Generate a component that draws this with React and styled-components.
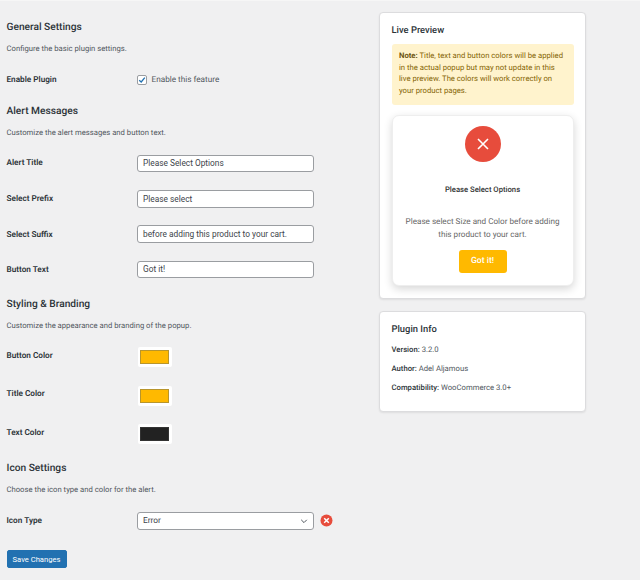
import React from 'react';
import styled, { createGlobalStyle } from 'styled-components';

const FONT = `Roboto, "Open Sans", "Liberation Sans", sans-serif`;
const Global = createGlobalStyle`
  html, body { margin: 0; padding: 0; background: #f0f0f1; }
  body { font-family: ${FONT}; color: #3c434a; text-rendering: geometricPrecision; }
`;
const Page = styled.div`
  width: 640px; height: 580px; overflow: hidden; box-sizing: border-box;
  display: flex; align-items: flex-start; padding: 0 0 0 6.5px; border-top: 1px solid #f6f6f6;
`;
const Main = styled.form`width: 372.5px; flex: none; padding-top: 20px;`;
const SectionTitle = styled.h2`
  margin: 0; font-size: 10.2px; line-height: 14px; font-weight: 500; color: #2c3338;
`;
const Description = styled.p`
  margin: 7px 0 0; font-size: 7.7px; line-height: 14px; color: #50575e; height: 14px;
`;
const Section = styled.section`margin-top: ${p => p.$top}px;`;
const Row = styled.div`
  display: grid; grid-template-columns: 130.5px auto; justify-content: start; align-items: center;
  height: ${p => p.$h}px; margin-top: ${p => p.$top}px;
`;
const Label = styled.label`
  font-size: 8.2px; font-weight: 600; color: #2c3338; line-height: 12px; position: relative; top: ${p => p.$shift || 0}px;
`;
const CheckLine = styled.div`display: flex; align-items: center; gap: 5px; font-size: 8.2px; color: #50575e;`;
const Box = styled.span`
  width: 8px; height: 8px; border: 1px solid #9a9da1; border-radius: 2px; background: #fff; display: flex;
  align-items: center; justify-content: center; margin-left: -0.5px;
`;
const TextInput = styled.input`
  box-sizing: border-box; width: 177px; height: 17.5px; border: 1px solid #9a9da1; border-radius: 3px;
  background: #fff; padding: 0 5px; font: 8.33px ${FONT}; color: #3c434a; outline: none;
`;
const Swatch = styled.span`
  box-sizing: border-box; display: block; width: 34px; height: 20px; background: #fff; border-radius: 2px;
  padding: 3px 2.5px; margin-left: 0.5px;
`;
const SwatchFill = styled.span`
  display: block; height: 100%; box-sizing: border-box; background: ${p => p.$c};
  border: 1px solid ${p => p.$edge};
`;
const SelectLine = styled.div`display: flex; align-items: center; gap: 6px;`;
const SelectBox = styled.div`
  box-sizing: border-box; width: 177px; height: 17.5px; border: 1px solid #9a9da1; border-radius: 3px; background: #fff;
  padding: 0 5px; font-size: 8.33px; color: #3c434a; display: flex; align-items: center; justify-content: space-between;
`;
const SaveButton = styled.button`
  display: block; margin-top: 20.5px; width: 60px; height: 18px; padding: 0; background: #2271b1; color: #fff;
  border: 1px solid #2271b1; border-radius: 2px; font: 7.6px ${FONT};
`;
const Side = styled.aside`width: 207px; flex: none; display: flex; flex-direction: column; gap: 12px; padding-top: 11px;`;
const Card = styled.div`
  box-sizing: border-box; background: #fff; border: 1px solid #dcdcde; border-radius: 4px;
  box-shadow: 0 1px 2px rgba(0,0,0,.08); padding: ${p => p.$pad};
  height: ${p => p.$h}px;
`;
const CardTitle = styled.h3`margin: 0; font-size: 9.4px; line-height: 13px; font-weight: 500; color: #2c3338;`;
const Note = styled.div`
  box-sizing: border-box; margin-top: 7px; height: 61px; padding: 6px 7.5px; background: #fff3cd; border-radius: 3px;
  font-size: 7.7px; line-height: 11.7px; color: #856404; white-space: nowrap;
  b { font-weight: 700; color: #6b5410; }
`;
const Popup = styled.div`
  box-sizing: border-box; margin-top: 10px; height: 171px; background: #fff; border-radius: 7px; border: 1px solid #eee;
  box-shadow: 0 3px 8px rgba(0,0,0,.16); display: flex; flex-direction: column; align-items: center; padding-top: 10px;
`;
const ErrorCircle = styled.div`
  width: 36px; height: 36px; border-radius: 50%; background: #e74c3c; display: flex; align-items: center; justify-content: center;
`;
const PopupTitle = styled.div`margin-top: 22px; font-size: 7.7px; line-height: 12px; font-weight: 500; color: #333;`;
const PopupText = styled.div`margin-top: 19px; font-size: 8.15px; line-height: 12.8px; color: #666; text-align: center; white-space: nowrap;`;
const GotIt = styled.div`
  margin-top: 9px; width: 48px; height: 23px; border-radius: 3px; background: #ffb900; color: #fff; font-size: 8.6px;
  font-weight: 500; display: flex; align-items: center; justify-content: center;
`;
const InfoLine = styled.p`
  margin: ${p => p.$top}px 0 0; font-size: 7.7px; line-height: 11px; color: #50575e;
  b { font-weight: 500; color: #2c3338; }
`;

function Field({ label, value, top, shift }) {
  return <Row $h={17.5} $top={top}><Label $shift={shift}>{label}</Label><TextInput readOnly value={value} /></Row>;
}
function ColorField({ label, color, edge, top }) {
  return <Row $h={20} $top={top}><Label $shift={-1.5}>{label}</Label><Swatch><SwatchFill $c={color} $edge={edge} /></Swatch></Row>;
}

export default function App() {
  return (
    <Page>
      <Global />
      <Main>
        <SectionTitle>General Settings</SectionTitle>
        <Description>Configure the basic plugin settings.</Description>
        <Row $h={14} $top={17}>
          <Label>Enable Plugin</Label>
          <CheckLine>
            <Box><svg width="8" height="8" viewBox="0 0 8 8"><path d="M1.2 4.2 3.2 6 6.8 1.6" fill="none" stroke="#2271b1" strokeWidth="1.3" /></svg></Box>
            Enable this feature
          </CheckLine>
        </Row>
        <Section $top={18}>
          <SectionTitle>Alert Messages</SectionTitle>
          <Description>Customize the alert messages and button text.</Description>
          <Field label="Alert Title" value="Please Select Options" top={14.5} shift={0} />
          <Field label="Select Prefix" value="Please select" top={18} shift={0} />
          <Field label="Select Suffix" value="before adding this product to your cart." top={17.5} shift={1} />
          <Field label="Button Text" value="Got it!" top={18} shift={1} />
        </Section>
        <Section $top={19.5}>
          <SectionTitle>Styling &amp; Branding</SectionTitle>
          <Description>Customize the appearance and branding of the popup.</Description>
          <ColorField label="Button Color" color="#ffb900" edge="#b8952c" top={14.5} />
          <ColorField label="Title Color" color="#ffb900" edge="#b8952c" top={18.5} />
          <ColorField label="Text Color" color="#222" edge="#333" top={18.5} />
        </Section>
        <Section $top={18}>
          <SectionTitle>Icon Settings</SectionTitle>
          <Description>Choose the icon type and color for the alert.</Description>
          <Row $h={17.5} $top={15}>
            <Label>Icon Type</Label>
            <SelectLine>
              <SelectBox>
                Error
                <svg width="8" height="8" viewBox="0 0 8 8"><path d="M1.2 2.8 4 5.6 6.8 2.8" fill="none" stroke="#50575e" strokeWidth="1" /></svg>
              </SelectBox>
              <svg width="13" height="13" viewBox="0 0 13 13"><circle cx="6.5" cy="6.5" r="6" fill="#e74c3c" /><path d="M4.2 4.2 8.8 8.8M8.8 4.2 4.2 8.8" stroke="#fff" strokeWidth="1.5" /></svg>
            </SelectLine>
          </Row>
          <SaveButton type="button">Save Changes</SaveButton>
        </Section>
      </Main>
      <Side>
        <Card $pad="11px 11.5px 0" $h={287}>
          <CardTitle>Live Preview</CardTitle>
          <Note><b>Note:</b> Title, text and button colors will be applied<br />in the actual popup but may not update in this<br />live preview. The colors will work correctly on<br />your product pages.</Note>
          <Popup>
            <ErrorCircle><svg width="14" height="14" viewBox="0 0 14 14"><path d="M2 2 12 12M12 2 2 12" stroke="#fff" strokeWidth="1.6" /></svg></ErrorCircle>
            <PopupTitle>Please Select Options</PopupTitle>
            <PopupText>Please select Size and Color before adding<br />this product to your cart.</PopupText>
            <GotIt>Got it!</GotIt>
          </Popup>
        </Card>
        <Card $pad="11px 11.5px 0" $h={101}>
          <CardTitle>Plugin Info</CardTitle>
          <InfoLine $top={8}><b>Version:</b> 3.2.0</InfoLine>
          <InfoLine $top={8}><b>Author:</b> Adel Aljamous</InfoLine>
          <InfoLine $top={8}><b>Compatibility:</b> WooCommerce 3.0+</InfoLine>
        </Card>
      </Side>
    </Page>
  );
}
